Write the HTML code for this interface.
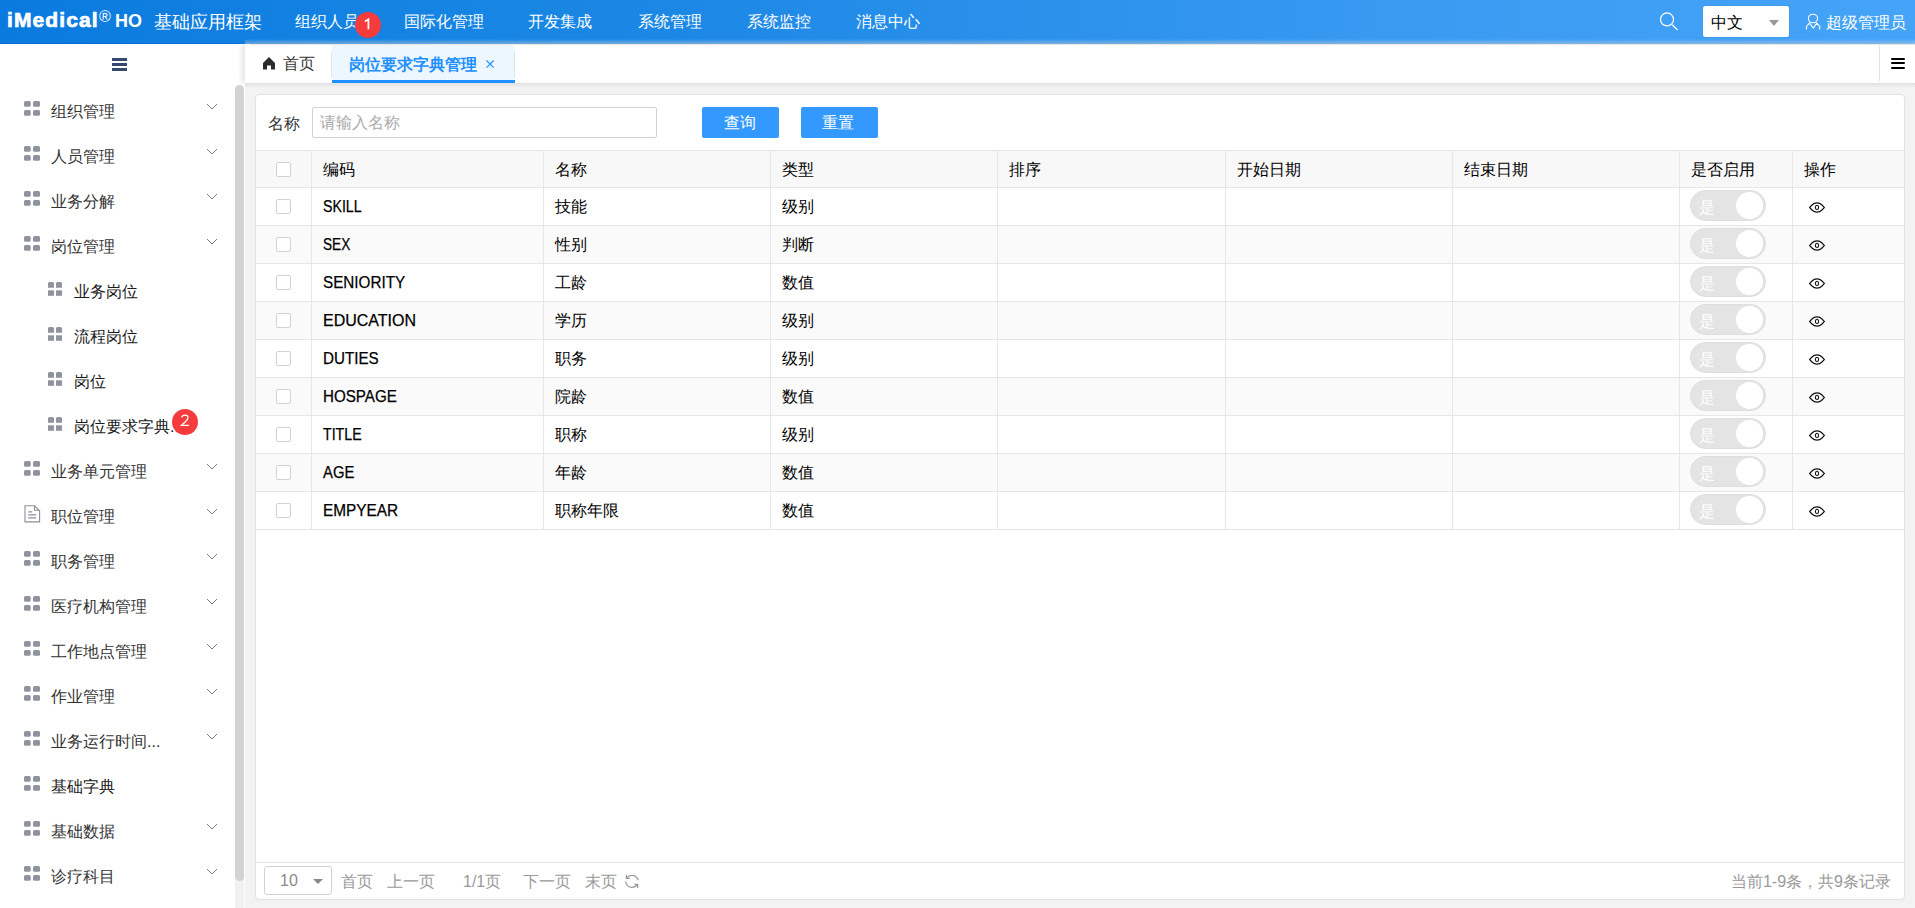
<!DOCTYPE html>
<html><head><meta charset="utf-8">
<style>
*{box-sizing:border-box}
html,body{margin:0;padding:0}
body{width:1915px;height:908px;overflow:hidden;position:relative;background:#f3f3f3;font-family:"Liberation Sans",sans-serif;font-size:16px;color:#333}
svg{display:block}
.abs{position:absolute}
#hdr{position:absolute;left:0;top:0;width:1915px;height:44px;background:linear-gradient(to right,#0b7adf 0%,#1483e2 20%,#1c88e5 35%,#3a9bf2 75%,#45a4f7 100%);color:#fff}
#hdr .nav{position:absolute;top:12px;font-size:16px;white-space:nowrap}
.badge{position:absolute;width:26px;height:26px;border-radius:50%;background:#f53b3b}
#side{position:absolute;left:0;top:44px;width:245px;height:864px;background:#fff}
.mi{position:absolute;left:0;width:235px;height:45px}
.mi .ic{position:absolute}
.gi{fill:#8f939d}
.mt{position:absolute;top:13px;font-size:16px;color:#333;white-space:nowrap}
.ch{position:absolute;left:206px;top:14px}
#tabs{position:absolute;left:245px;top:44px;width:1670px;height:39px;background:#fff;border-top-left-radius:3px;box-shadow:-4px 0 5px rgba(0,0,0,0.09)}
#card{position:absolute;left:255px;top:94px;width:1650px;height:806px;background:#fff;border:1px solid #e2e2e2;border-radius:4px}
.tr{position:absolute;left:0;width:1648px}
.td{position:absolute;top:0;height:100%;border-right:1px solid #e6e6e6;border-top:1px solid #e6e6e6;border-bottom:1px solid #e6e6e6}
.td:last-child{border-right:none}
.tx{position:absolute;left:12px;top:9px;color:#000;font-size:16px;white-space:nowrap}
.tx.en{top:10px;transform-origin:0 0;-webkit-text-stroke:0.25px #000}
.chk{position:absolute;left:20px;top:11px;width:15px;height:15px;border:1px solid #d2d2d2;border-radius:2px;background:#fff}
.tg{position:absolute;left:11px;top:2px;width:76px;height:31px;border-radius:16px;background:#e4e4e4;border:1px solid #dedede}
.tgt{position:absolute;left:8px;top:7px;color:#fff;font-size:16px}
.knob{position:absolute;right:2px;top:1px;width:27px;height:27px;border-radius:50%;background:#fff}
.eye{position:absolute;left:17px;top:14px;line-height:0}
.pg{color:#999;top:777px}

</style></head><body>
<div id="hdr">
  <div class="abs" style="left:7px;top:8px;font-weight:bold;font-size:21px;letter-spacing:1.1px;white-space:nowrap;-webkit-text-stroke:0.7px #fff">iMedical</div>
  <div class="abs" style="left:99px;top:8px;font-size:16px">®</div>
  <div class="abs" style="left:115px;top:11px;font-size:18px;font-weight:bold">HO</div>
  <div class="nav" style="left:154px;font-size:18px;top:10px">基础应用框架</div>
  <div class="nav" style="left:295px">组织人员</div>
  <div class="badge" style="left:355px;top:12px"><svg style="position:absolute;left:8px;top:6px" width="9" height="13" viewBox="0 0 9 13"><path d="M1.8 3.6 L5.4 1.2 V11.2" fill="none" stroke="#fff" stroke-width="1.7"/></svg></div>
  <div class="nav" style="left:404px">国际化管理</div>
  <div class="nav" style="left:528px">开发集成</div>
  <div class="nav" style="left:638px">系统管理</div>
  <div class="nav" style="left:747px">系统监控</div>
  <div class="nav" style="left:856px">消息中心</div>
  <svg class="abs" style="left:1658px;top:12px" width="22" height="20" viewBox="0 0 22 20"><circle cx="9" cy="7.4" r="6.5" fill="none" stroke="#fff" stroke-width="1.2"/><path d="M14.2 12.8 L19.6 18" stroke="#fff" stroke-width="1.3"/></svg>
  <div class="abs" style="left:1703px;top:6px;width:86px;height:31px;background:#fff;border-radius:2px;box-shadow:0 0 1px rgba(0,0,0,.3)"><span class="abs" style="left:8px;top:7px;color:#000;font-size:16px">中文</span><span class="abs" style="left:66px;top:14px;width:0;height:0;border-left:5px solid transparent;border-right:5px solid transparent;border-top:6px solid #999"></span></div>
  <svg class="abs" style="left:1804px;top:12px" width="18" height="20" viewBox="0 0 18 20"><ellipse cx="9" cy="6.5" rx="4.6" ry="4.2" fill="none" stroke="#fff" stroke-width="1.1"/><path d="M2.5 17.5 V14.5 L5.5 11.2 L9.3 16 L12.8 11.2 L15.7 14.5 V17.5" fill="none" stroke="#fff" stroke-width="1.1"/></svg>
  <div class="nav" style="left:1826px;top:13px">超级管理员</div>
</div>
<div class="abs" style="left:0;top:43px;width:240px;height:1px;background:rgba(0,95,210,0.7)"></div>
<div class="abs" style="left:245px;top:39px;width:1670px;height:5px;background:linear-gradient(rgba(215,222,230,0),rgba(215,222,230,0.5))"></div>
<div id="side">
  <svg class="abs" style="left:112px;top:14px" width="15" height="13" viewBox="0 0 15 13"><rect x="0" y="0" width="15" height="3" fill="#344a6e"/><rect x="0" y="5" width="15" height="3" fill="#344a6e"/><rect x="0" y="10" width="15" height="3" fill="#344a6e"/></svg>
  <div class="abs" style="left:235px;top:45px;width:9px;height:819px;background:#f1f1f1"></div>
  <div class="abs" style="left:235px;top:41px;width:9px;height:796px;background:#d3d3d3;border-radius:4.5px"></div>
  <div class="abs" style="left:0;top:-44px"><div class="mi" style="top:89px"><span class="ic" style="left:24px;top:12px"><svg class="gi" width="16" height="15" viewBox="0 0 16 15"><rect x="0" y="0" width="6.7" height="5.8" rx="1.5"/><rect x="9" y="0" width="7" height="5.8" rx="1.5"/><rect x="0" y="9" width="6.7" height="5.8" rx="1.5"/><rect x="9" y="9" width="7" height="5.8" rx="1.5"/></svg></span><span class="mt" style="left:51px;color:#333">组织管理</span><span class="ch"><svg width="12" height="8" viewBox="0 0 12 8"><path d="M1 1 L6 6 L11 1" fill="none" stroke="#7a7d85" stroke-width="1"/></svg></span></div><div class="mi" style="top:134px"><span class="ic" style="left:24px;top:12px"><svg class="gi" width="16" height="15" viewBox="0 0 16 15"><rect x="0" y="0" width="6.7" height="5.8" rx="1.5"/><rect x="9" y="0" width="7" height="5.8" rx="1.5"/><rect x="0" y="9" width="6.7" height="5.8" rx="1.5"/><rect x="9" y="9" width="7" height="5.8" rx="1.5"/></svg></span><span class="mt" style="left:51px;color:#333">人员管理</span><span class="ch"><svg width="12" height="8" viewBox="0 0 12 8"><path d="M1 1 L6 6 L11 1" fill="none" stroke="#7a7d85" stroke-width="1"/></svg></span></div><div class="mi" style="top:179px"><span class="ic" style="left:24px;top:12px"><svg class="gi" width="16" height="15" viewBox="0 0 16 15"><rect x="0" y="0" width="6.7" height="5.8" rx="1.5"/><rect x="9" y="0" width="7" height="5.8" rx="1.5"/><rect x="0" y="9" width="6.7" height="5.8" rx="1.5"/><rect x="9" y="9" width="7" height="5.8" rx="1.5"/></svg></span><span class="mt" style="left:51px;color:#333">业务分解</span><span class="ch"><svg width="12" height="8" viewBox="0 0 12 8"><path d="M1 1 L6 6 L11 1" fill="none" stroke="#7a7d85" stroke-width="1"/></svg></span></div><div class="mi" style="top:224px"><span class="ic" style="left:24px;top:12px"><svg class="gi" width="16" height="15" viewBox="0 0 16 15"><rect x="0" y="0" width="6.7" height="5.8" rx="1.5"/><rect x="9" y="0" width="7" height="5.8" rx="1.5"/><rect x="0" y="9" width="6.7" height="5.8" rx="1.5"/><rect x="9" y="9" width="7" height="5.8" rx="1.5"/></svg></span><span class="mt" style="left:51px;color:#333">岗位管理</span><span class="ch"><svg width="12" height="8" viewBox="0 0 12 8"><path d="M1 1 L6 6 L11 1" fill="none" stroke="#7a7d85" stroke-width="1"/></svg></span></div><div class="mi" style="top:269px"><span class="ic" style="left:48px;top:13px"><svg class="gi" width="14" height="14" viewBox="0 0 14 14"><path d="M0 1.5 Q0 0 1.5 0 H4.5 Q6 0 6 1.5 V5.8 H0 Z M8 1.5 Q8 0 9.5 0 H12.5 Q14 0 14 1.5 V5.8 H8 Z"/><rect x="0" y="8.3" width="6" height="5.5"/><rect x="8" y="8.3" width="6" height="5.5"/></svg></span><span class="mt" style="left:74px;color:#1a1a1a">业务岗位</span></div><div class="mi" style="top:314px"><span class="ic" style="left:48px;top:13px"><svg class="gi" width="14" height="14" viewBox="0 0 14 14"><path d="M0 1.5 Q0 0 1.5 0 H4.5 Q6 0 6 1.5 V5.8 H0 Z M8 1.5 Q8 0 9.5 0 H12.5 Q14 0 14 1.5 V5.8 H8 Z"/><rect x="0" y="8.3" width="6" height="5.5"/><rect x="8" y="8.3" width="6" height="5.5"/></svg></span><span class="mt" style="left:74px;color:#1a1a1a">流程岗位</span></div><div class="mi" style="top:359px"><span class="ic" style="left:48px;top:13px"><svg class="gi" width="14" height="14" viewBox="0 0 14 14"><path d="M0 1.5 Q0 0 1.5 0 H4.5 Q6 0 6 1.5 V5.8 H0 Z M8 1.5 Q8 0 9.5 0 H12.5 Q14 0 14 1.5 V5.8 H8 Z"/><rect x="0" y="8.3" width="6" height="5.5"/><rect x="8" y="8.3" width="6" height="5.5"/></svg></span><span class="mt" style="left:74px;color:#1a1a1a">岗位</span></div><div class="mi" style="top:404px"><span class="ic" style="left:48px;top:13px"><svg class="gi" width="14" height="14" viewBox="0 0 14 14"><path d="M0 1.5 Q0 0 1.5 0 H4.5 Q6 0 6 1.5 V5.8 H0 Z M8 1.5 Q8 0 9.5 0 H12.5 Q14 0 14 1.5 V5.8 H8 Z"/><rect x="0" y="8.3" width="6" height="5.5"/><rect x="8" y="8.3" width="6" height="5.5"/></svg></span><span class="mt" style="left:74px;color:#1a1a1a">岗位要求字典...</span></div><div class="mi" style="top:449px"><span class="ic" style="left:24px;top:12px"><svg class="gi" width="16" height="15" viewBox="0 0 16 15"><rect x="0" y="0" width="6.7" height="5.8" rx="1.5"/><rect x="9" y="0" width="7" height="5.8" rx="1.5"/><rect x="0" y="9" width="6.7" height="5.8" rx="1.5"/><rect x="9" y="9" width="7" height="5.8" rx="1.5"/></svg></span><span class="mt" style="left:51px;color:#333">业务单元管理</span><span class="ch"><svg width="12" height="8" viewBox="0 0 12 8"><path d="M1 1 L6 6 L11 1" fill="none" stroke="#7a7d85" stroke-width="1"/></svg></span></div><div class="mi" style="top:494px"><span class="ic" style="left:24px;top:11px"><svg width="17" height="18" viewBox="0 0 17 18" fill="none" stroke="#8a8e99" stroke-width="1.1"><path d="M1 0.8 H10.5 L15.6 5.8 V16.9 H1 Z"/><path d="M10.5 0.8 V5.3 H15.6"/><path d="M4.2 6.9 H8.2 M4.2 9.9 H12.2 M4.2 12.9 H12.2"/></svg></span><span class="mt" style="left:51px;color:#333">职位管理</span><span class="ch"><svg width="12" height="8" viewBox="0 0 12 8"><path d="M1 1 L6 6 L11 1" fill="none" stroke="#7a7d85" stroke-width="1"/></svg></span></div><div class="mi" style="top:539px"><span class="ic" style="left:24px;top:12px"><svg class="gi" width="16" height="15" viewBox="0 0 16 15"><rect x="0" y="0" width="6.7" height="5.8" rx="1.5"/><rect x="9" y="0" width="7" height="5.8" rx="1.5"/><rect x="0" y="9" width="6.7" height="5.8" rx="1.5"/><rect x="9" y="9" width="7" height="5.8" rx="1.5"/></svg></span><span class="mt" style="left:51px;color:#333">职务管理</span><span class="ch"><svg width="12" height="8" viewBox="0 0 12 8"><path d="M1 1 L6 6 L11 1" fill="none" stroke="#7a7d85" stroke-width="1"/></svg></span></div><div class="mi" style="top:584px"><span class="ic" style="left:24px;top:12px"><svg class="gi" width="16" height="15" viewBox="0 0 16 15"><rect x="0" y="0" width="6.7" height="5.8" rx="1.5"/><rect x="9" y="0" width="7" height="5.8" rx="1.5"/><rect x="0" y="9" width="6.7" height="5.8" rx="1.5"/><rect x="9" y="9" width="7" height="5.8" rx="1.5"/></svg></span><span class="mt" style="left:51px;color:#333">医疗机构管理</span><span class="ch"><svg width="12" height="8" viewBox="0 0 12 8"><path d="M1 1 L6 6 L11 1" fill="none" stroke="#7a7d85" stroke-width="1"/></svg></span></div><div class="mi" style="top:629px"><span class="ic" style="left:24px;top:12px"><svg class="gi" width="16" height="15" viewBox="0 0 16 15"><rect x="0" y="0" width="6.7" height="5.8" rx="1.5"/><rect x="9" y="0" width="7" height="5.8" rx="1.5"/><rect x="0" y="9" width="6.7" height="5.8" rx="1.5"/><rect x="9" y="9" width="7" height="5.8" rx="1.5"/></svg></span><span class="mt" style="left:51px;color:#333">工作地点管理</span><span class="ch"><svg width="12" height="8" viewBox="0 0 12 8"><path d="M1 1 L6 6 L11 1" fill="none" stroke="#7a7d85" stroke-width="1"/></svg></span></div><div class="mi" style="top:674px"><span class="ic" style="left:24px;top:12px"><svg class="gi" width="16" height="15" viewBox="0 0 16 15"><rect x="0" y="0" width="6.7" height="5.8" rx="1.5"/><rect x="9" y="0" width="7" height="5.8" rx="1.5"/><rect x="0" y="9" width="6.7" height="5.8" rx="1.5"/><rect x="9" y="9" width="7" height="5.8" rx="1.5"/></svg></span><span class="mt" style="left:51px;color:#333">作业管理</span><span class="ch"><svg width="12" height="8" viewBox="0 0 12 8"><path d="M1 1 L6 6 L11 1" fill="none" stroke="#7a7d85" stroke-width="1"/></svg></span></div><div class="mi" style="top:719px"><span class="ic" style="left:24px;top:12px"><svg class="gi" width="16" height="15" viewBox="0 0 16 15"><rect x="0" y="0" width="6.7" height="5.8" rx="1.5"/><rect x="9" y="0" width="7" height="5.8" rx="1.5"/><rect x="0" y="9" width="6.7" height="5.8" rx="1.5"/><rect x="9" y="9" width="7" height="5.8" rx="1.5"/></svg></span><span class="mt" style="left:51px;color:#333">业务运行时间...</span><span class="ch"><svg width="12" height="8" viewBox="0 0 12 8"><path d="M1 1 L6 6 L11 1" fill="none" stroke="#7a7d85" stroke-width="1"/></svg></span></div><div class="mi" style="top:764px"><span class="ic" style="left:24px;top:12px"><svg class="gi" width="16" height="15" viewBox="0 0 16 15"><rect x="0" y="0" width="6.7" height="5.8" rx="1.5"/><rect x="9" y="0" width="7" height="5.8" rx="1.5"/><rect x="0" y="9" width="6.7" height="5.8" rx="1.5"/><rect x="9" y="9" width="7" height="5.8" rx="1.5"/></svg></span><span class="mt" style="left:51px;color:#1a1a1a">基础字典</span></div><div class="mi" style="top:809px"><span class="ic" style="left:24px;top:12px"><svg class="gi" width="16" height="15" viewBox="0 0 16 15"><rect x="0" y="0" width="6.7" height="5.8" rx="1.5"/><rect x="9" y="0" width="7" height="5.8" rx="1.5"/><rect x="0" y="9" width="6.7" height="5.8" rx="1.5"/><rect x="9" y="9" width="7" height="5.8" rx="1.5"/></svg></span><span class="mt" style="left:51px;color:#333">基础数据</span><span class="ch"><svg width="12" height="8" viewBox="0 0 12 8"><path d="M1 1 L6 6 L11 1" fill="none" stroke="#7a7d85" stroke-width="1"/></svg></span></div><div class="mi" style="top:854px"><span class="ic" style="left:24px;top:12px"><svg class="gi" width="16" height="15" viewBox="0 0 16 15"><rect x="0" y="0" width="6.7" height="5.8" rx="1.5"/><rect x="9" y="0" width="7" height="5.8" rx="1.5"/><rect x="0" y="9" width="6.7" height="5.8" rx="1.5"/><rect x="9" y="9" width="7" height="5.8" rx="1.5"/></svg></span><span class="mt" style="left:51px;color:#333">诊疗科目</span><span class="ch"><svg width="12" height="8" viewBox="0 0 12 8"><path d="M1 1 L6 6 L11 1" fill="none" stroke="#7a7d85" stroke-width="1"/></svg></span></div></div>
</div>
<div id="tabs">
  <svg class="abs" style="left:18px;top:13px" width="12" height="13" viewBox="0 0 12 13"><path d="M6 0 L12 6 V12.5 H8 V8.5 H4 V12.5 H0 V6 Z" fill="#2b2b2b"/></svg>
  <span class="abs" style="left:38px;top:10px;color:#333">首页</span>
  <div class="abs" style="left:86px;top:7px;width:1px;height:27px;background:#e6e6e6"></div>
  <div class="abs" style="left:87px;top:0;width:183px;height:39px;background:#ecf7ff;border-bottom:3px solid #1e90ff"></div>
  <span class="abs" style="left:104px;top:11px;color:#1e8ffc;font-weight:bold">岗位要求字典管理</span>
  <svg class="abs" style="left:240px;top:15px" width="10" height="10" viewBox="0 0 10 10"><path d="M1.5 1.5 L8.7 8.7 M8.7 1.5 L1.5 8.7" stroke="#1e8ffc" stroke-width="1.1"/></svg>
  <div class="abs" style="left:269px;top:7px;width:1px;height:27px;background:#e2e2e2"></div>
  <div class="abs" style="left:1629px;top:0;width:6px;height:37px;border-right:1px solid #e2e2e2;border-top-right-radius:4px"></div>
  <svg class="abs" style="left:1646px;top:14px" width="14" height="12" viewBox="0 0 14 12"><rect x="0" y="0" width="14" height="2" rx="1" fill="#000"/><rect x="0" y="4" width="14" height="2" rx="1" fill="#000"/><rect x="0" y="9" width="14" height="2" rx="1" fill="#000"/></svg>
</div>
<div class="abs" style="left:245px;top:83px;width:1670px;height:5px;background:linear-gradient(#e0e0e0,#f3f3f3)"></div>
<div class="abs" style="left:250px;top:44px;width:1665px;height:1px;background:#e9e7e5"></div>
<div id="card">
  <span class="abs" style="left:12px;top:19px;color:#333">名称</span>
  <div class="abs" style="left:56px;top:12px;width:345px;height:31px;border:1px solid #d2d2d2;border-radius:2px"><span class="abs" style="left:7px;top:5px;color:#aaa">请输入名称</span></div>
  <div class="abs" style="left:446px;top:12px;width:77px;height:31px;background:#3399ff;border-radius:2px;color:#fff;text-align:center;line-height:32px;padding-right:2px">查询</div>
  <div class="abs" style="left:545px;top:12px;width:77px;height:31px;background:#3399ff;border-radius:2px;color:#fff;text-align:center;line-height:32px;padding-right:3px">重置</div>
  <div class="tr" style="top:55px;height:38px;background:#f8f8f8"><div class="td" style="left:0px;width:56px"><div class="chk"></div></div><div class="td" style="left:55px;width:233px"><span class="tx">编码</span></div><div class="td" style="left:287px;width:228px"><span class="tx">名称</span></div><div class="td" style="left:514px;width:228px"><span class="tx">类型</span></div><div class="td" style="left:741px;width:229px"><span class="tx">排序</span></div><div class="td" style="left:969px;width:228px"><span class="tx">开始日期</span></div><div class="td" style="left:1196px;width:228px"><span class="tx">结束日期</span></div><div class="td" style="left:1423px;width:114px"><span class="tx">是否启用</span></div><div class="td" style="left:1536px;width:113px"><span class="tx">操作</span></div></div><div class="tr" style="top:92px;height:39px;background:#ffffff"><div class="td" style="left:0px;width:56px"><div class="chk"></div></div><div class="td" style="left:55px;width:233px"><span class="tx en" style="transform:scaleX(0.886)">SKILL</span></div><div class="td" style="left:287px;width:228px"><span class="tx">技能</span></div><div class="td" style="left:514px;width:228px"><span class="tx">级别</span></div><div class="td" style="left:741px;width:229px"></div><div class="td" style="left:969px;width:228px"></div><div class="td" style="left:1196px;width:228px"></div><div class="td" style="left:1423px;width:114px"><div class="tg"><span class="tgt">是</span><span class="knob"></span></div></div><div class="td" style="left:1536px;width:113px"><span class="eye"><svg width="17" height="11" viewBox="0 0 17 11"><path d="M0.6 5.5 L3 3 Q5 0.9 8 0.9 Q11 0.9 13 3 L15.4 5.5 L13 8 Q11 10.1 8 10.1 Q5 10.1 3 8 Z" fill="none" stroke="#111" stroke-width="1.1"/><ellipse cx="8" cy="5.4" rx="1.6" ry="2.1" fill="none" stroke="#111" stroke-width="1.1"/></svg></span></div></div><div class="tr" style="top:130px;height:39px;background:#fafafa"><div class="td" style="left:0px;width:56px"><div class="chk"></div></div><div class="td" style="left:55px;width:233px"><span class="tx en" style="transform:scaleX(0.85)">SEX</span></div><div class="td" style="left:287px;width:228px"><span class="tx">性别</span></div><div class="td" style="left:514px;width:228px"><span class="tx">判断</span></div><div class="td" style="left:741px;width:229px"></div><div class="td" style="left:969px;width:228px"></div><div class="td" style="left:1196px;width:228px"></div><div class="td" style="left:1423px;width:114px"><div class="tg"><span class="tgt">是</span><span class="knob"></span></div></div><div class="td" style="left:1536px;width:113px"><span class="eye"><svg width="17" height="11" viewBox="0 0 17 11"><path d="M0.6 5.5 L3 3 Q5 0.9 8 0.9 Q11 0.9 13 3 L15.4 5.5 L13 8 Q11 10.1 8 10.1 Q5 10.1 3 8 Z" fill="none" stroke="#111" stroke-width="1.1"/><ellipse cx="8" cy="5.4" rx="1.6" ry="2.1" fill="none" stroke="#111" stroke-width="1.1"/></svg></span></div></div><div class="tr" style="top:168px;height:39px;background:#ffffff"><div class="td" style="left:0px;width:56px"><div class="chk"></div></div><div class="td" style="left:55px;width:233px"><span class="tx en" style="transform:scaleX(0.953)">SENIORITY</span></div><div class="td" style="left:287px;width:228px"><span class="tx">工龄</span></div><div class="td" style="left:514px;width:228px"><span class="tx">数值</span></div><div class="td" style="left:741px;width:229px"></div><div class="td" style="left:969px;width:228px"></div><div class="td" style="left:1196px;width:228px"></div><div class="td" style="left:1423px;width:114px"><div class="tg"><span class="tgt">是</span><span class="knob"></span></div></div><div class="td" style="left:1536px;width:113px"><span class="eye"><svg width="17" height="11" viewBox="0 0 17 11"><path d="M0.6 5.5 L3 3 Q5 0.9 8 0.9 Q11 0.9 13 3 L15.4 5.5 L13 8 Q11 10.1 8 10.1 Q5 10.1 3 8 Z" fill="none" stroke="#111" stroke-width="1.1"/><ellipse cx="8" cy="5.4" rx="1.6" ry="2.1" fill="none" stroke="#111" stroke-width="1.1"/></svg></span></div></div><div class="tr" style="top:206px;height:39px;background:#fafafa"><div class="td" style="left:0px;width:56px"><div class="chk"></div></div><div class="td" style="left:55px;width:233px"><span class="tx en" style="transform:scaleX(1.0)">EDUCATION</span></div><div class="td" style="left:287px;width:228px"><span class="tx">学历</span></div><div class="td" style="left:514px;width:228px"><span class="tx">级别</span></div><div class="td" style="left:741px;width:229px"></div><div class="td" style="left:969px;width:228px"></div><div class="td" style="left:1196px;width:228px"></div><div class="td" style="left:1423px;width:114px"><div class="tg"><span class="tgt">是</span><span class="knob"></span></div></div><div class="td" style="left:1536px;width:113px"><span class="eye"><svg width="17" height="11" viewBox="0 0 17 11"><path d="M0.6 5.5 L3 3 Q5 0.9 8 0.9 Q11 0.9 13 3 L15.4 5.5 L13 8 Q11 10.1 8 10.1 Q5 10.1 3 8 Z" fill="none" stroke="#111" stroke-width="1.1"/><ellipse cx="8" cy="5.4" rx="1.6" ry="2.1" fill="none" stroke="#111" stroke-width="1.1"/></svg></span></div></div><div class="tr" style="top:244px;height:39px;background:#ffffff"><div class="td" style="left:0px;width:56px"><div class="chk"></div></div><div class="td" style="left:55px;width:233px"><span class="tx en" style="transform:scaleX(0.948)">DUTIES</span></div><div class="td" style="left:287px;width:228px"><span class="tx">职务</span></div><div class="td" style="left:514px;width:228px"><span class="tx">级别</span></div><div class="td" style="left:741px;width:229px"></div><div class="td" style="left:969px;width:228px"></div><div class="td" style="left:1196px;width:228px"></div><div class="td" style="left:1423px;width:114px"><div class="tg"><span class="tgt">是</span><span class="knob"></span></div></div><div class="td" style="left:1536px;width:113px"><span class="eye"><svg width="17" height="11" viewBox="0 0 17 11"><path d="M0.6 5.5 L3 3 Q5 0.9 8 0.9 Q11 0.9 13 3 L15.4 5.5 L13 8 Q11 10.1 8 10.1 Q5 10.1 3 8 Z" fill="none" stroke="#111" stroke-width="1.1"/><ellipse cx="8" cy="5.4" rx="1.6" ry="2.1" fill="none" stroke="#111" stroke-width="1.1"/></svg></span></div></div><div class="tr" style="top:282px;height:39px;background:#fafafa"><div class="td" style="left:0px;width:56px"><div class="chk"></div></div><div class="td" style="left:55px;width:233px"><span class="tx en" style="transform:scaleX(0.948)">HOSPAGE</span></div><div class="td" style="left:287px;width:228px"><span class="tx">院龄</span></div><div class="td" style="left:514px;width:228px"><span class="tx">数值</span></div><div class="td" style="left:741px;width:229px"></div><div class="td" style="left:969px;width:228px"></div><div class="td" style="left:1196px;width:228px"></div><div class="td" style="left:1423px;width:114px"><div class="tg"><span class="tgt">是</span><span class="knob"></span></div></div><div class="td" style="left:1536px;width:113px"><span class="eye"><svg width="17" height="11" viewBox="0 0 17 11"><path d="M0.6 5.5 L3 3 Q5 0.9 8 0.9 Q11 0.9 13 3 L15.4 5.5 L13 8 Q11 10.1 8 10.1 Q5 10.1 3 8 Z" fill="none" stroke="#111" stroke-width="1.1"/><ellipse cx="8" cy="5.4" rx="1.6" ry="2.1" fill="none" stroke="#111" stroke-width="1.1"/></svg></span></div></div><div class="tr" style="top:320px;height:39px;background:#ffffff"><div class="td" style="left:0px;width:56px"><div class="chk"></div></div><div class="td" style="left:55px;width:233px"><span class="tx en" style="transform:scaleX(0.886)">TITLE</span></div><div class="td" style="left:287px;width:228px"><span class="tx">职称</span></div><div class="td" style="left:514px;width:228px"><span class="tx">级别</span></div><div class="td" style="left:741px;width:229px"></div><div class="td" style="left:969px;width:228px"></div><div class="td" style="left:1196px;width:228px"></div><div class="td" style="left:1423px;width:114px"><div class="tg"><span class="tgt">是</span><span class="knob"></span></div></div><div class="td" style="left:1536px;width:113px"><span class="eye"><svg width="17" height="11" viewBox="0 0 17 11"><path d="M0.6 5.5 L3 3 Q5 0.9 8 0.9 Q11 0.9 13 3 L15.4 5.5 L13 8 Q11 10.1 8 10.1 Q5 10.1 3 8 Z" fill="none" stroke="#111" stroke-width="1.1"/><ellipse cx="8" cy="5.4" rx="1.6" ry="2.1" fill="none" stroke="#111" stroke-width="1.1"/></svg></span></div></div><div class="tr" style="top:358px;height:39px;background:#fafafa"><div class="td" style="left:0px;width:56px"><div class="chk"></div></div><div class="td" style="left:55px;width:233px"><span class="tx en" style="transform:scaleX(0.926)">AGE</span></div><div class="td" style="left:287px;width:228px"><span class="tx">年龄</span></div><div class="td" style="left:514px;width:228px"><span class="tx">数值</span></div><div class="td" style="left:741px;width:229px"></div><div class="td" style="left:969px;width:228px"></div><div class="td" style="left:1196px;width:228px"></div><div class="td" style="left:1423px;width:114px"><div class="tg"><span class="tgt">是</span><span class="knob"></span></div></div><div class="td" style="left:1536px;width:113px"><span class="eye"><svg width="17" height="11" viewBox="0 0 17 11"><path d="M0.6 5.5 L3 3 Q5 0.9 8 0.9 Q11 0.9 13 3 L15.4 5.5 L13 8 Q11 10.1 8 10.1 Q5 10.1 3 8 Z" fill="none" stroke="#111" stroke-width="1.1"/><ellipse cx="8" cy="5.4" rx="1.6" ry="2.1" fill="none" stroke="#111" stroke-width="1.1"/></svg></span></div></div><div class="tr" style="top:396px;height:39px;background:#ffffff"><div class="td" style="left:0px;width:56px"><div class="chk"></div></div><div class="td" style="left:55px;width:233px"><span class="tx en" style="transform:scaleX(0.961)">EMPYEAR</span></div><div class="td" style="left:287px;width:228px"><span class="tx">职称年限</span></div><div class="td" style="left:514px;width:228px"><span class="tx">数值</span></div><div class="td" style="left:741px;width:229px"></div><div class="td" style="left:969px;width:228px"></div><div class="td" style="left:1196px;width:228px"></div><div class="td" style="left:1423px;width:114px"><div class="tg"><span class="tgt">是</span><span class="knob"></span></div></div><div class="td" style="left:1536px;width:113px"><span class="eye"><svg width="17" height="11" viewBox="0 0 17 11"><path d="M0.6 5.5 L3 3 Q5 0.9 8 0.9 Q11 0.9 13 3 L15.4 5.5 L13 8 Q11 10.1 8 10.1 Q5 10.1 3 8 Z" fill="none" stroke="#111" stroke-width="1.1"/><ellipse cx="8" cy="5.4" rx="1.6" ry="2.1" fill="none" stroke="#111" stroke-width="1.1"/></svg></span></div></div>
  <div class="abs" style="left:0;top:767px;width:1648px;height:1px;background:#e6e6e6"></div>
  <div class="abs" style="left:8px;top:771px;width:68px;height:29px;border:1px solid #d2d2d2;border-radius:3px"><span class="abs" style="left:15px;top:5px;color:#8a8a8a">10</span><span class="abs" style="left:48px;top:12px;width:0;height:0;border-left:5px solid transparent;border-right:5px solid transparent;border-top:5px solid #888"></span></div>
  <span class="abs pg" style="left:85px">首页</span>
  <span class="abs pg" style="left:131px">上一页</span>
  <span class="abs pg" style="left:207px">1/1页</span>
  <span class="abs pg" style="left:267px">下一页</span>
  <span class="abs pg" style="left:329px">末页</span>
  <svg class="abs" style="left:364px;top:775px" width="25" height="25" viewBox="620 870 25 25" fill="none" stroke="#999" stroke-width="1.3"><path d="M626.8 877.8 Q628.5 875.4 632 875.4 Q636.3 875.4 638.3 880.3"/><path d="M626.4 874.8 V878.3 H629.9"/><path d="M625.6 881.5 Q626.6 887.4 632 887.4 Q635.4 887.4 637.2 884.7"/><path d="M634.4 884.4 H637.6 V887.9"/></svg>
  <span class="abs pg" style="right:13px">当前1-9条，共9条记录</span>
</div>
<div class="badge" style="left:172px;top:409px"><svg style="position:absolute;left:8px;top:5px" width="11" height="13" viewBox="0 0 11 13"><path d="M1.7 3.4 Q2.2 1.1 5 1.1 Q8 1.1 8 3.6 Q8 5.6 5.2 8.1 L1.6 11.3 H9" fill="none" stroke="#fff" stroke-width="1.3"/></svg></div>

</body></html>
